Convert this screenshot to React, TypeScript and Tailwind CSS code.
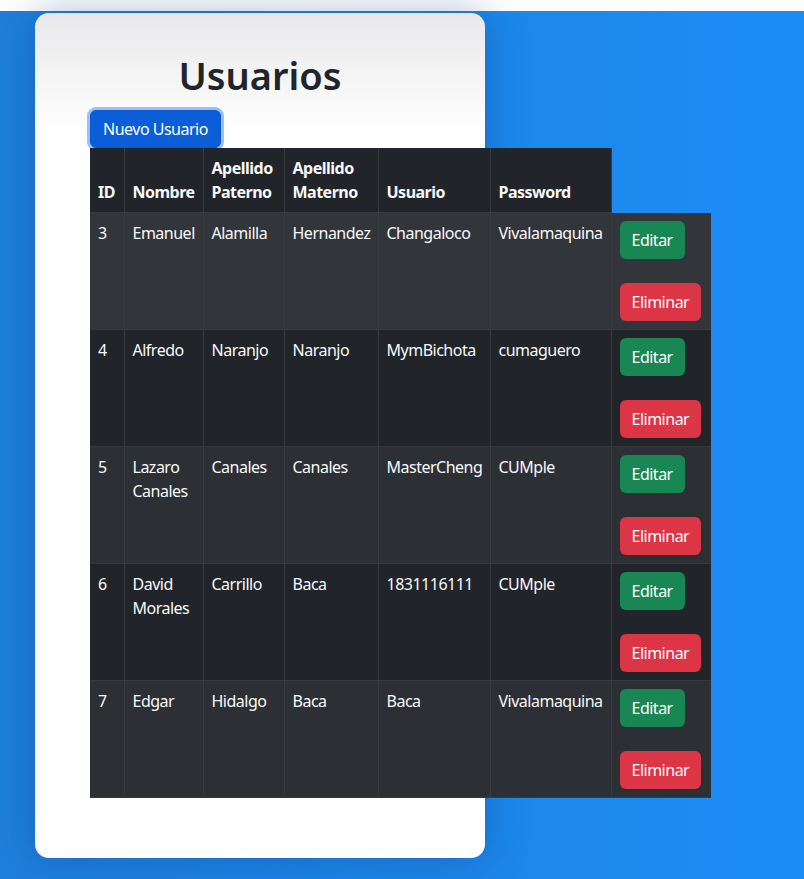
const users = [
  { id: 3, nombre: "Emanuel", paterno: "Alamilla", materno: "Hernandez", usuario: "Changaloco", password: "Vivalamaquina" },
  { id: 4, nombre: "Alfredo", paterno: "Naranjo", materno: "Naranjo", usuario: "MymBichota", password: "cumaguero" },
  { id: 5, nombre: "Lazaro Canales", paterno: "Canales", materno: "Canales", usuario: "MasterCheng", password: "CUMple" },
  { id: 6, nombre: "David Morales", paterno: "Carrillo", materno: "Baca", usuario: "1831116111", password: "CUMple" },
  { id: 7, nombre: "Edgar", paterno: "Hidalgo", materno: "Baca", usuario: "Baca", password: "Vivalamaquina" },
];

const rowBg = ["bg-[#323539]", "bg-[#212529]", "bg-[#2c3034]", "bg-[#212529]", "bg-[#2c3034]"];

const th = "border-r border-b border-[#373b3e] bg-[#212529] px-2 py-2 text-left align-bottom font-bold leading-6";
const td = "border-r border-b border-[#373b3e] px-2 py-2 align-top leading-6";

export default function App() {
  return (
    <div className="min-h-[879px] bg-white pt-[11px] font-['Noto_Sans',sans-serif] text-base tracking-[-0.5px]">
      <div className="h-[868px] bg-[linear-gradient(90deg,#1e7fdc,#1c8cf5)] px-[35px] pt-[2px]">
        <div className="h-[845px] w-[450px] rounded-[14px] bg-[linear-gradient(180deg,#e8e8ea_0%,#ffffff_14%)] pl-[55px] pt-[38px] shadow-[0_0_40px_rgba(10,50,120,0.35)]">
          <h1 className="w-[340px] text-center text-[38px] font-semibold leading-[48px] tracking-normal text-[#212529]">
            Usuarios
          </h1>
          <button className="mt-[11px] h-[38px] rounded-md border border-[#0a58ca] bg-[#0b5ed7] px-3 text-white shadow-[0_0_0_3px_rgba(49,132,253,0.5)]">
            Nuevo Usuario
          </button>
          <table className="relative w-[621px] table-fixed border-collapse text-[#f8f9fa]">
            <colgroup>
              <col className="w-[34px]" />
              <col className="w-[79px]" />
              <col className="w-[81px]" />
              <col className="w-[94px]" />
              <col className="w-[112px]" />
              <col className="w-[121px]" />
              <col className="w-[100px]" />
            </colgroup>
            <thead>
              <tr>
                <th className={th}>ID</th>
                <th className={th}>Nombre</th>
                <th className={th}>Apellido Paterno</th>
                <th className={th}>Apellido Materno</th>
                <th className={th}>Usuario</th>
                <th className={th}>Password</th>
              </tr>
            </thead>
            <tbody>
              {users.map((u, i) => (
                <tr key={u.id} className={rowBg[i]}>
                  <td className={td}>{u.id}</td>
                  <td className={td}>{u.nombre}</td>
                  <td className={td}>{u.paterno}</td>
                  <td className={td}>{u.materno}</td>
                  <td className={td}>{u.usuario}</td>
                  <td className={td}>{u.password}</td>
                  <td className={`${td} border-r-0`}>
                    <div className="flex flex-col items-start gap-6">
                      <button className="h-[38px] rounded-md bg-[#198754] px-3 text-white">Editar</button>
                      <button className="h-[38px] rounded-md bg-[#dc3545] px-3 text-white">Eliminar</button>
                    </div>
                  </td>
                </tr>
              ))}
            </tbody>
          </table>
        </div>
      </div>
    </div>
  );
}
